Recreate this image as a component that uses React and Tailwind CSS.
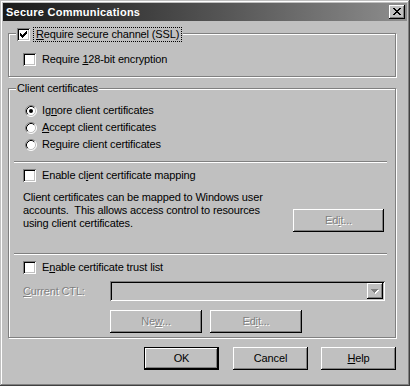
const raised =
  "shadow-[inset_-1px_-1px_#000,inset_1px_1px_#fff,inset_-2px_-2px_#808080]";
const sunken =
  "shadow-[inset_1px_1px_#808080,inset_-1px_-1px_#fff,inset_2px_2px_#000,inset_-2px_-2px_#c0c0c0]";
const disabledText = "text-[#808080] [text-shadow:1px_1px_0_#fff]";

function Check({ checked }) {
  return (
    <span
      className={
        "w-[13px] h-[13px] shrink-0 bg-white flex items-center justify-center " +
        sunken
      }
    >
      {checked && (
        <svg width="7" height="7" viewBox="0 0 7 7" shapeRendering="crispEdges">
          <path
            fill="#000"
            d="M0 2h1v3H0z M1 3h1v3H1z M2 4h1v3H2z M3 3h1v3H3z M4 2h1v3H4z M5 1h1v3H5z M6 0h1v3H6z"
          />
        </svg>
      )}
    </span>
  );
}

function Radio({ checked }) {
  return (
    <svg width="12" height="12" viewBox="0 0 12 12" className="shrink-0">
      <circle cx="6" cy="6" r="5" fill="#fff" />
      <path d="M2.11 9.89 A5.5 5.5 0 0 1 9.89 2.11" fill="none" stroke="#808080" strokeWidth="1" />
      <path d="M9.89 2.11 A5.5 5.5 0 0 1 2.11 9.89" fill="none" stroke="#fff" strokeWidth="1" />
      <path d="M2.82 9.18 A4.5 4.5 0 0 1 9.18 2.82" fill="none" stroke="#000" strokeWidth="1" />
      <path d="M9.18 2.82 A4.5 4.5 0 0 1 2.82 9.18" fill="none" stroke="#c0c0c0" strokeWidth="1" />
      {checked && <circle cx="6" cy="6" r="2" fill="#000" />}
    </svg>
  );
}

function Btn({ children, w, disabled, isDefault }) {
  return (
    <div
      className={
        "h-[23px] flex items-center justify-center bg-[#c0c0c0] " +
        raised +
        (isDefault ? " border border-black" : "") +
        (disabled ? " " + disabledText : "")
      }
      style={{ width: w }}
    >
      <span>{children}</span>
    </div>
  );
}

function Sep() {
  return <div className="mt-[8px] ml-[5px] w-[373px] border-t border-b border-t-[#808080] border-b-white" />;
}

export default function App() {
  return (
    <div className="w-[410px] h-[386px] bg-[#c0c0c0] p-[3px] flex flex-col text-[11px] leading-[13px] tracking-[-0.15px] text-black [font-family:'Liberation_Sans',Arial,sans-serif] shadow-[inset_-1px_-1px_#404040,inset_1px_1px_#c0c0c0,inset_-2px_-2px_#808080,inset_2px_2px_#fff]">
      {/* Title bar */}
      <div className="h-[18px] shrink-0 flex items-center justify-between bg-linear-to-r from-[#1a1a1a] to-[#8e8e8e] pl-[3px] pr-[2px]">
        <span className="text-white font-bold text-[11px] tracking-[0.25px]">Secure Communications</span>
        <div className={"w-[16px] h-[14px] bg-[#c0c0c0] flex justify-center pt-[3px] " + raised}>
          <svg width="8" height="7" viewBox="0 0 8 7" shapeRendering="crispEdges">
            <path
              fill="#000"
              d="M0 0h2v1H0z M6 0h2v1H6z M1 1h2v1H1z M5 1h2v1H5z M2 2h4v1H2z M3 3h2v1H3z M2 4h4v1H2z M1 5h2v1H1z M5 5h2v1H5z M0 6h2v1H0z M6 6h2v1H6z"
            />
          </svg>
        </div>
      </div>

      <div className="pl-[5px] pt-[12px] flex flex-col">
        {/* Group 1 */}
        <div className="relative w-[388px] h-[44px] border border-[#808080] shadow-[inset_1px_1px_#fff,1px_1px_#fff] pt-[19px] pl-[14px]">
          <div className="absolute left-[7px] top-[-7px] h-[15px] px-[1px] bg-[#c0c0c0] flex items-center">
            <Check checked />
            <div className="ml-[3px] h-[15px] border border-dotted border-black px-[2px] flex items-center">
              <span>
                <u>R</u>equire secure channel (SSL)
              </span>
            </div>
          </div>
          <div className="flex items-center h-[13px]">
            <Check />
            <span className="ml-[6px]">
              Require <u>1</u>28-bit encryption
            </span>
          </div>
        </div>

        {/* Group 2 */}
        <div className="relative mt-[11px] w-[388px] h-[250px] border border-[#808080] shadow-[inset_1px_1px_#fff,1px_1px_#fff] flex flex-col">
          <div className="absolute left-[7px] top-[-7px] h-[13px] px-[1px] bg-[#c0c0c0] flex items-center">
            Client certificates
          </div>

          <div className="pt-[13px] pl-[16px] flex flex-col">
            <div className="flex items-center h-[17px]">
              <Radio checked />
              <span className="ml-[5px]">
                Ig<u>n</u>ore client certificates
              </span>
            </div>
            <div className="flex items-center h-[17px]">
              <Radio />
              <span className="ml-[5px]">
                <u>A</u>ccept client certificates
              </span>
            </div>
            <div className="flex items-center h-[17px]">
              <Radio />
              <span className="ml-[5px]">
                Re<u>q</u>uire client certificates
              </span>
            </div>
          </div>

          <Sep />

          <div className="mt-[6px] ml-[14px] flex items-center h-[13px]">
            <Check />
            <span className="ml-[6px]">
              Enable cl<u>i</u>ent certificate mapping
            </span>
          </div>

          <div className="mt-[9px] ml-[14px] flex items-start">
            <p className="w-[270px] leading-[13px]">
              Client certificates can be mapped to Windows user
              <br />
              accounts.&nbsp; This allows access control to resources
              <br />
              using client certificates.
            </p>
            <div className="mt-[18px]">
              <Btn w={91} disabled>
                Ed<u>i</u>t...
              </Btn>
            </div>
          </div>

          <div className="mt-[21px] ml-[5px] w-[373px] border-t border-b border-t-[#808080] border-b-white" />

          <div className="mt-[6px] ml-[14px] flex items-center h-[13px]">
            <Check />
            <span className="ml-[6px]">
              E<u>n</u>able certificate trust list
            </span>
          </div>

          <div className="mt-[7px] ml-[14px] flex items-center">
            <span className={"w-[87px] " + disabledText}>
              <u>C</u>urrent CTL:
            </span>
            <div className={"w-[275px] h-[20px] bg-[#c0c0c0] p-[2px] flex justify-end " + sunken}>
              <div className={"w-[16px] h-full bg-[#c0c0c0] flex items-center justify-center " + raised}>
                <svg width="8" height="5" viewBox="0 0 8 5" shapeRendering="crispEdges">
                  <path fill="#fff" d="M1 1h7v1H1z M2 2h5v1H2z M3 3h3v1H3z M4 4h1v1H4z" />
                  <path fill="#808080" d="M0 0h7v1H0z M1 1h5v1H1z M2 2h3v1H2z M3 3h1v1H3z" />
                </svg>
              </div>
            </div>
          </div>

          <div className="mt-[9px] ml-[101px] flex gap-[8px]">
            <Btn w={92} disabled>
              Ne<u>w</u>...
            </Btn>
            <Btn w={92} disabled>
              Ed<u>i</u>t...
            </Btn>
          </div>
        </div>

        {/* Bottom buttons */}
        <div className="mt-[9px] w-[388px] flex justify-end">
          <Btn w={75} isDefault>
            OK
          </Btn>
          <div className="ml-[14px]">
            <Btn w={75}>Cancel</Btn>
          </div>
          <div className="ml-[13px]">
            <Btn w={75}>
              <u>H</u>elp
            </Btn>
          </div>
        </div>
      </div>
    </div>
  );
}
